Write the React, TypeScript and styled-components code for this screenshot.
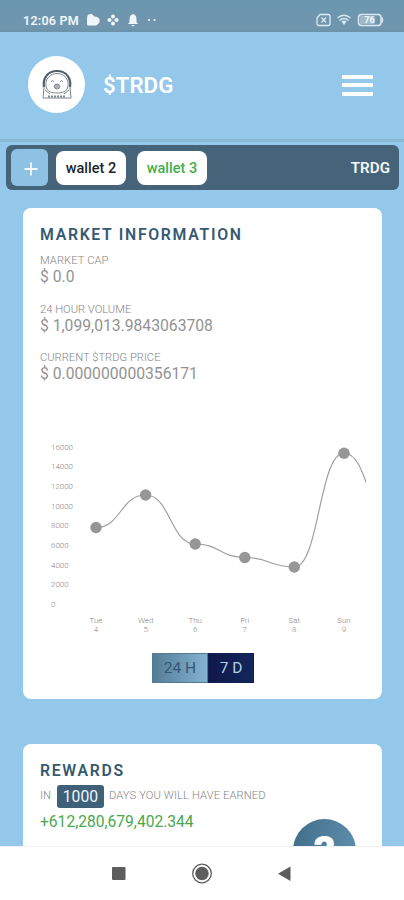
import React from "react";
import styled, { createGlobalStyle } from "styled-components";

const GlobalStyle = createGlobalStyle`
  * { box-sizing: border-box; }
  body { margin: 0; background: #93c8ea; font-family: Roboto, "Liberation Sans", sans-serif; }
`;

const Screen = styled.div`
  display: flex;
  flex-direction: column;
  width: 404px;
  height: 900px;
  overflow: hidden;
  background: #93c8ea;
`;

const StatusBar = styled.div`
  flex: none;
  display: flex;
  align-items: center;
  height: 32px;
  padding: 8px 20px 0 23px;
  background: linear-gradient(#6b96b1, #7096ad 85%, #6c92a9);
  color: #f1f6fa;
`;

const Clock = styled.span`
  width: 63px;
  font-size: 12.5px;
  font-weight: 600;
  letter-spacing: 0.25px;
  white-space: nowrap;
`;

const StatusSpacer = styled.div`
  flex: 1;
`;

const Header = styled.header`
  flex: none;
  display: flex;
  align-items: center;
  height: 110px;
  padding: 0 31px 3px 28px;
  border-bottom: 3px solid #89b8d6;
`;

const Avatar = styled.div`
  display: flex;
  align-items: center;
  justify-content: center;
  width: 57px;
  height: 57px;
  border-radius: 50%;
  background: #fff;
`;

const Brand = styled.h1`
  flex: 1;
  margin: 2px 0 0 18px;
  font-size: 22.3px;
  line-height: 28px;
  font-weight: 600;
  color: #fff;
`;

const MenuButton = styled.button`
  display: flex;
  flex-direction: column;
  justify-content: space-between;
  width: 31px;
  height: 21px;
  margin-top: 2px;
  padding: 0;
  border: 0;
  background: none;
`;

const MenuBar = styled.span`
  height: 4px;
  border-radius: 1px;
  background: #fff;
`;

const Content = styled.main`
  flex: 1;
  min-height: 0;
  overflow: hidden;
  display: flex;
  flex-direction: column;
`;

const WalletBar = styled.nav`
  flex: none;
  display: flex;
  align-items: center;
  height: 45px;
  margin: 3px 5px 0 6px;
  padding: 0 9px 0 5px;
  border-radius: 6px;
  background: #466479;
`;

const AddWallet = styled.button`
  display: flex;
  align-items: center;
  justify-content: center;
  width: 37px;
  height: 37px;
  padding: 3px 0 0 3px;
  border: 0;
  border-radius: 6px;
  background: #8dc2e4;
`;

const WalletChip = styled.button<{ $active?: boolean; $gap: number }>`
  width: 70px;
  height: 34px;
  margin-left: ${(p) => p.$gap}px;
  padding: 2px 0 0;
  border: 0;
  border-radius: 8px;
  background: #fff;
  color: ${(p) => (p.$active ? "#43ad4d" : "#20252a")};
  font: 500 14.5px Roboto, sans-serif;
`;

const Token = styled.span`
  margin-left: auto;
  font-size: 15.2px;
  font-weight: 600;
  color: #f4f8fb;
`;

const Card = styled.section<{ $height: number; $top: number }>`
  flex: none;
  display: flex;
  flex-direction: column;
  height: ${(p) => p.$height}px;
  margin: ${(p) => p.$top}px 22px 0 23px;
  padding: 17px 16px 0 17px;
  border-radius: 8px;
  background: #fff;
`;

const CardTitle = styled.h2`
  margin: 0;
  font-size: 15.8px;
  line-height: 20px;
  font-weight: 600;
  letter-spacing: 1.7px;
  color: #345972;
`;

const Stat = styled.div`
  display: flex;
  flex-direction: column;
  height: 48.5px;
`;

const Stats = styled.div`
  margin-top: 9px;
`;

const Label = styled.span<{ $spacing?: number }>`
  font-size: 11.2px;
  line-height: 14px;
  font-weight: 300;
  letter-spacing: ${(p) => p.$spacing ?? 0}px;
  color: #858585;
  white-space: nowrap;
`;

const Value = styled.span`
  font-size: 15.7px;
  line-height: 18px;
  color: #939393;
`;

const ChartSvg = styled.svg`
  flex: none;
  display: block;
  margin-top: 30.5px;
  width: 326px;
  height: 204px;
`;

const AxisText = styled.text`
  font-family: Roboto, sans-serif;
  font-size: 7.9px;
  font-weight: 300;
  fill: #858585;
`;

const RangeToggle = styled.div`
  display: flex;
  align-self: center;
  margin-top: 19px;
  height: 30px;
`;

const RangeButton = styled.button<{ $selected?: boolean }>`
  width: ${(p) => (p.$selected ? 46 : 56)}px;
  height: 30px;
  padding: 0;
  border: 1px solid ${(p) => (p.$selected ? "#122050" : "#547991")};
  background: ${(p) =>
    p.$selected
      ? "linear-gradient(90deg, #10184a, #12275b)"
      : "linear-gradient(90deg, #547c96, #83b3d1)"};
  color: ${(p) => (p.$selected ? "#b5cfe6" : "#355776")};
  font: 400 15.5px Roboto, sans-serif;
`;

const EarnedRow = styled.div`
  display: flex;
  align-items: center;
  height: 24px;
  margin-top: 3px;
`;

const Days = styled.span`
  width: 47px;
  height: 23px;
  margin: 1px 5px 0 6px;
  border-radius: 3px;
  background: #3f6079;
  color: #eef5fa;
  font-size: 15.7px;
  line-height: 24px;
  text-align: center;
`;

const Earned = styled.div`
  margin-top: 5px;
  font-size: 15.6px;
  line-height: 18px;
  color: #49a84e;
`;

const HelpButton = styled.button`
  flex: none;
  display: flex;
  align-items: flex-start;
  justify-content: center;
  align-self: flex-end;
  width: 63px;
  height: 63px;
  margin: -12px 10px 0 0;
  padding: 11px 0 0;
  border: 0;
  border-radius: 50%;
  background: linear-gradient(100deg, #426d89, #5f90af);
  color: #fff;
  font: 900 42px/44px Roboto, sans-serif;
`;

const SystemNav = styled.footer`
  flex: none;
  display: flex;
  justify-content: center;
  height: 54px;
  padding-top: 16px;
  border-top: 1px solid #eef0f1;
  background: #fff;
`;

const NavIcon = styled.svg`
  width: 24px;
  height: 24px;
  margin: 0 29.5px;
  fill: #5d5d5d;
`;

const points = [
  { x: 56, y: 97.5, day: "Tue", date: 4 },
  { x: 105.6, y: 65, day: "Wed", date: 5 },
  { x: 155.2, y: 114, day: "Thu", date: 6 },
  { x: 204.8, y: 127.5, day: "Fri", date: 7 },
  { x: 254.3, y: 137, day: "Sat", date: 8 },
  { x: 304, y: 23.2, day: "Sun", date: 9 },
  { x: 353.6, y: 97, day: "Mon", date: 10 },
];

const curve = points.reduce((d, p, i) => {
  if (i === 0) return `M${p.x} ${p.y}`;
  const prev = points[i - 1];
  const mid = (prev.x + p.x) / 2;
  return `${d} C${mid} ${prev.y} ${mid} ${p.y} ${p.x} ${p.y}`;
}, "");

const visible = points.slice(0, 6);
const ticks = [16000, 14000, 12000, 10000, 8000, 6000, 4000, 2000, 0];

const Chart = () => (
  <ChartSvg viewBox="0 0 326 204">
    {ticks.map((t, i) => (
      <AxisText key={t} x={11} y={19.7 + i * 19.65}>
        {t}
      </AxisText>
    ))}
    <path d={curve} fill="none" stroke="#a0a0a0" strokeWidth="1.2" />
    {visible.map((p) => (
      <g key={p.day}>
        <circle cx={p.x} cy={p.y} r="5.7" fill="#969696" />
        <AxisText x={p.x} y={193} textAnchor="middle">
          {p.day}
        </AxisText>
        <AxisText x={p.x} y={202} textAnchor="middle">
          {p.date}
        </AxisText>
      </g>
    ))}
  </ChartSvg>
);

const Mascot = () => (
  <svg width="32" height="32" viewBox="0 0 32 32" fill="none" stroke="#7a858e" strokeWidth="1">
    <path d="M3 19C1.5 10 7 3 16 3S30.5 10 29 19" stroke="#52616d" strokeWidth="2.2" />
    <path d="M5 18C4 11 9 5.5 16 5.5S28 11 27 18C26 24 21 25 16 25S6 24 5 18Z" />
    <path d="M10 13.5q1.5-1.5 3 0M19 13.5q1.5-1.5 3 0" />
    <ellipse cx="16" cy="18.5" rx="2.8" ry="2.5" fill="#aab1b6" stroke="#858e95" />
    <path d="M3 19L2 30H30L29 19M4 22L9 26M28 22L23 26" />
    <path d="M7 28.5H25" strokeWidth="2" strokeDasharray="2 1" />
  </svg>
);

const NotificationIcons = () => (
  <svg width="74" height="14" viewBox="0 0 74 14" fill="#f0f5f9">
    <path d="M1 5Q1 1 5 1Q7.5 1 8 3.5Q12 3 13.5 6Q14.5 10 10 12.5H2.5Q1 12.5 1 11Z" />
    <g>
      <circle cx="27" cy="3.5" r="2" />
      <circle cx="27" cy="10.5" r="2" />
      <circle cx="23.5" cy="7" r="2" />
      <circle cx="30.5" cy="7" r="2" />
      <circle cx="27" cy="7" r="1.2" fill="#7da0b5" />
    </g>
    <path d="M47 1Q50.5 2 50.5 6V9L52 11H42L43.5 9V6Q43.5 2 47 1ZM45 12H49L47 13.5Z" />
    <circle cx="63" cy="7" r="1.1" />
    <circle cx="68.5" cy="7" r="1.1" />
  </svg>
);

const SystemIcons = () => (
  <svg width="68" height="14" viewBox="0 0 68 14" fill="none" stroke="#dce9f2">
    <path d="M4 1.5H12Q14 1.5 14 3.5V10.5Q14 12.5 12 12.5H3Q1 12.5 1 10.5V5Z" strokeWidth="1.3" />
    <path d="M5.5 4.5L10 9.5M10 4.5L5.5 9.5" strokeWidth="1.2" />
    <path d="M21.5 5Q28 -.5 34.5 5M23.5 7.5Q28 3.5 32.5 7.5" strokeWidth="1.4" />
    <path d="M25.5 8.5Q28 6.5 30.5 8.5L28 12Z" fill="#dce9f2" stroke="none" />
    <rect x="42.5" y="1.5" width="22.5" height="11" rx="3" strokeWidth="1.5" />
    <path d="M66 4.5Q68 7 66 9.5Z" fill="#dce9f2" />
    <rect x="44" y="3" width="15" height="8" rx="1" fill="#9fb9ca" stroke="none" />
    <text x="53.5" y="10.2" textAnchor="middle" fontFamily="Roboto, sans-serif" fontSize="9" fontWeight="700" fill="#f1f6fa" stroke="none">
      76
    </text>
  </svg>
);

const stats = [
  { label: "MARKET CAP", value: "$ 0.0", spacing: 0.08 },
  { label: "24 HOUR VOLUME", value: "$ 1,099,013.9843063708", spacing: 0 },
  { label: "CURRENT $TRDG PRICE", value: "$ 0.000000000356171", spacing: 0 },
];

export default function App() {
  return (
    <>
      <GlobalStyle />
      <Screen>
        <StatusBar>
          <Clock>12:06 PM</Clock>
          <NotificationIcons />
          <StatusSpacer />
          <SystemIcons />
        </StatusBar>
        <Header>
          <Avatar>
            <Mascot />
          </Avatar>
          <Brand>$TRDG</Brand>
          <MenuButton aria-label="Menu">
            <MenuBar />
            <MenuBar />
            <MenuBar />
          </MenuButton>
        </Header>
        <Content>
          <WalletBar>
            <AddWallet aria-label="Add wallet">
              <svg width="14" height="14" viewBox="0 0 14 14" stroke="#f5fafd" strokeWidth="1.8">
                <path d="M7 .5V13.5M.5 7H13.5" />
              </svg>
            </AddWallet>
            <WalletChip $gap={8}>wallet 2</WalletChip>
            <WalletChip $gap={11} $active>
              wallet 3
            </WalletChip>
            <Token>TRDG</Token>
          </WalletBar>
          <Card $height={491} $top={18}>
            <CardTitle>MARKET INFORMATION</CardTitle>
            <Stats>
              {stats.map((s) => (
                <Stat key={s.label}>
                  <Label $spacing={s.spacing}>{s.label}</Label>
                  <Value>{s.value}</Value>
                </Stat>
              ))}
            </Stats>
            <Chart />
            <RangeToggle>
              <RangeButton>24 H</RangeButton>
              <RangeButton $selected>7 D</RangeButton>
            </RangeToggle>
          </Card>
          <Card $height={220} $top={45}>
            <CardTitle>REWARDS</CardTitle>
            <EarnedRow>
              <Label>IN</Label>
              <Days>1000</Days>
              <Label $spacing={0.11}>DAYS YOU WILL HAVE EARNED</Label>
            </EarnedRow>
            <Earned>+612,280,679,402.344</Earned>
            <HelpButton>?</HelpButton>
          </Card>
        </Content>
        <SystemNav>
          <NavIcon viewBox="0 0 24 24">
            <rect x="5" y="4" width="13.5" height="13" rx="1" />
          </NavIcon>
          <NavIcon viewBox="0 0 24 24">
            <circle cx="12" cy="10.5" r="6.7" />
            <circle cx="12" cy="10.5" r="9.3" fill="none" stroke="#5d5d5d" strokeWidth="1.3" />
          </NavIcon>
          <NavIcon viewBox="0 0 24 24">
            <path d="M17.5 3.5V18L5 10.8Z" />
          </NavIcon>
        </SystemNav>
      </Screen>
    </>
  );
}
